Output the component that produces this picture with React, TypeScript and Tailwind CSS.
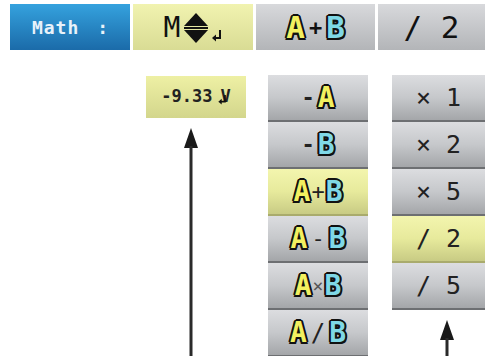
import React from "react";

const outline =
  "[text-shadow:2px_0_0_#111,-2px_0_0_#111,0_2px_0_#111,0_-2px_0_#111,1.5px_1.5px_0_#111,-1.5px_-1.5px_0_#111,1.5px_-1.5px_0_#111,-1.5px_1.5px_0_#111]";

function A({ size = "text-[28px]" }: { size?: string }) {
  return <span className={`${size} font-bold leading-none text-[#f2f060] ${outline}`}>A</span>;
}

function B({ size = "text-[28px]" }: { size?: string }) {
  return <span className={`${size} font-bold leading-none text-[#7fd8e6] ${outline}`}>B</span>;
}

function UpDown() {
  return (
    <svg width="26" height="32" viewBox="0 0 26 32">
      <polygon points="13,1 25,14 1,14" fill="#111" />
      <polygon points="13,31 25,18 1,18" fill="#111" />
      <rect x="1" y="15" width="24" height="2" fill="#111" />
    </svg>
  );
}

function Enter({ w = 10, h = 12 }: { w?: number; h?: number }) {
  return (
    <svg width={w} height={h} viewBox="0 0 10 12">
      <path d="M8 0 V8 H3" stroke="#111" strokeWidth="2" fill="none" />
      <polygon points="0,8 4,4.5 4,11.5" fill="#111" />
    </svg>
  );
}

function Arrow({ height }: { height: number }) {
  return (
    <svg width="16" height={height} viewBox={`0 0 16 ${height}`}>
      <polygon points="8,0 15,20 1,20" fill="#1a1a1a" />
      <rect x="6.5" y="18" width="3" height={height - 18} fill="#2a2a2a" />
    </svg>
  );
}

const grayCell =
  "flex h-[47px] items-center justify-center border-b-2 border-[#6d6f72] bg-linear-to-b from-[#dcdde0] via-[#c6c8cb] to-[#a4a6a9]";
const yellowCell =
  "flex h-[47px] items-center justify-center border-b-2 border-[#a9ab6c] bg-linear-to-b from-[#f3f5ae] via-[#e7ea9c] to-[#c8cb84]";

export default function App() {
  const ops: { key: string; node: React.ReactNode; active?: boolean }[] = [
    { key: "-A", node: <><span className="mr-[2px] text-[22px] font-bold text-[#222]">-</span><A /></> },
    { key: "-B", node: <><span className="mr-[2px] text-[22px] font-bold text-[#222]">-</span><B /></> },
    { key: "A+B", active: true, node: <><A /><span className="text-[22px] text-[#222]">+</span><B /></> },
    { key: "A-B", node: <><A /><span className="mx-[3px] text-[22px] text-[#222]">-</span><B /></> },
    { key: "AxB", node: <><A /><span className="text-[18px] text-[#555]">×</span><B /></> },
    { key: "A/B", node: <><A /><span className="mx-[3px] text-[24px] text-[#222]">/</span><B /></> },
  ];
  const scales = [
    { label: "× 1" },
    { label: "× 2" },
    { label: "× 5" },
    { label: "/ 2", active: true },
    { label: "/ 5" },
  ];

  return (
    <div className="h-[356px] w-[485px] overflow-hidden bg-white font-['DejaVu_Sans_Mono',monospace]">
      {/* top softkey bar */}
      <div className="ml-[10px] mt-[4px] flex h-[46px] gap-[3px]">
        <div className="flex w-[120px] items-center justify-center gap-[18px] bg-linear-to-b from-[#35a2de] to-[#1b6ba9] text-[18px] font-bold text-[#e8f2fa]">
          <span className="tracking-[1px]">Math</span>
          <span>:</span>
        </div>
        <div className="flex w-[120px] items-center justify-center gap-[3px] bg-linear-to-b from-[#f1f3b0] to-[#d9dc94] pt-[2px]">
          <span className="text-[28px] leading-none text-[#111]">M</span>
          <UpDown />
          <span className="mt-[16px]">
            <Enter w={10} h={12} />
          </span>
        </div>
        <div className="flex w-[119px] items-center justify-center gap-[4px] bg-linear-to-b from-[#d8d9dc] to-[#b3b5b8]">
          <A size="text-[31px]" />
          <span className="text-[22px] font-bold text-[#111]">+</span>
          <B size="text-[31px]" />
        </div>
        <div className="flex flex-1 items-center justify-center bg-linear-to-b from-[#d8d9dc] to-[#b3b5b8] text-[31px] leading-none text-[#111]">
          / 2
        </div>
      </div>

      {/* lower part */}
      <div className="flex pt-[25px]">
        <div className="ml-[146px] flex w-[100px] flex-col items-center">
          <div className="mt-[1px] flex h-[42px] w-[100px] items-center justify-center gap-[8px] bg-linear-to-b from-[#eef0a4] to-[#d3d68c] text-[17px] font-bold text-[#222]">
            <span>-9.33</span>
            <span className="relative flex items-center">
              <span className="text-[17px]">V</span>
              <span className="absolute left-[-2px] top-[11px]">
                <Enter w={9} h={10} />
              </span>
            </span>
          </div>
          <div className="mt-[10px] -ml-[10px]">
            <Arrow height={228} />
          </div>
        </div>

        <div className="ml-[22px] flex w-[100px] flex-col">
          {ops.map((o) => (
            <div key={o.key} className={o.active ? yellowCell : grayCell}>
              <div className="flex items-center gap-[1px]">{o.node}</div>
            </div>
          ))}
        </div>

        <div className="ml-[24px] flex flex-1 flex-col">
          {scales.map((s) => (
            <div key={s.label} className={s.active ? yellowCell : grayCell}>
              <span className="whitespace-pre text-[25px] leading-none text-[#222]">{s.label}</span>
            </div>
          ))}
          <div className="mt-[10px] ml-[47px]">
            <Arrow height={40} />
          </div>
        </div>
      </div>
    </div>
  );
}
